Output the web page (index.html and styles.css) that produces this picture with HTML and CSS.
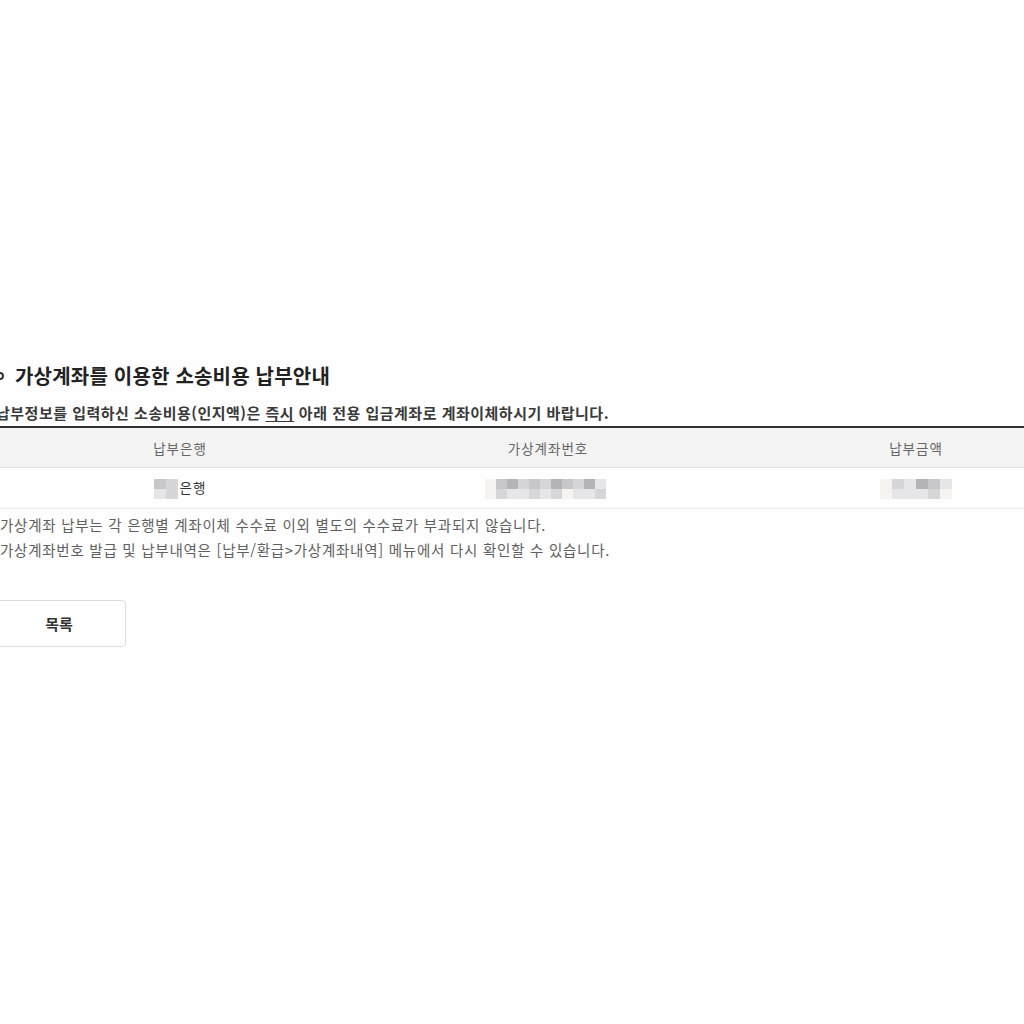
FILE: index.html
```html
<!DOCTYPE html>
<html lang="ko">
<head>
<meta charset="utf-8">
<link rel="stylesheet" href="styles.css">
</head>
<body>
<div class="page">
  <h2 class="title">가상계좌를 이용한 소송비용 납부안내</h2>
  <p class="desc">납부정보를 입력하신 소송비용(인지액)은 <u>즉시</u> 아래 전용 입금계좌로 계좌이체하시기 바랍니다.</p>
  <table class="tbl">
    <thead>
      <tr><th>납부은행</th><th>가상계좌번호</th><th>납부금액</th></tr>
    </thead>
    <tbody>
      <tr>
        <td><span class="mosaic m-bank"><i class="c3"></i><i class="c2"></i><i class="c1"></i><i class="c2"></i></span>은행</td>
        <td><span class="mosaic m-acct"><i class="c0"></i><i class="c3"></i><i class="c4"></i><i class="c2"></i><i class="c3"></i><i class="c2"></i><i class="c4"></i><i class="c3"></i><i class="c2"></i><i class="c4"></i><i class="c1"></i><i class="c0"></i><i class="c2"></i><i class="c1"></i><i class="c1"></i><i class="c2"></i><i class="c1"></i><i class="c2"></i><i class="c0"></i><i class="c1"></i><i class="c1"></i><i class="c2"></i></span></td>
        <td><span class="mosaic m-amt"><i class="c0"></i><i class="c2"></i><i class="c1"></i><i class="c4"></i><i class="c3"></i><i class="c1"></i><i class="c0"></i><i class="c1"></i><i class="c1"></i><i class="c1"></i><i class="c2"></i><i class="c0"></i></span></td>
      </tr>
    </tbody>
  </table>
  <ul class="notes">
    <li>가상계좌 납부는 각 은행별 계좌이체 수수료 이외 별도의 수수료가 부과되지 않습니다.</li>
    <li>가상계좌번호 발급 및 납부내역은 [납부/환급&gt;가상계좌내역] 메뉴에서 다시 확인할 수 있습니다.</li>
  </ul>
  <div class="actions">
    <button class="btn" type="button">목록</button>
  </div>
</div>
</body>
</html>
```

FILE: styles.css
```css
html, body {
  margin: 0;
  padding: 0;
  overflow: hidden;
  background: #fefefe;
}

body {
  font-family: "Noto Sans CJK KR", "Noto Sans", sans-serif;
  color: #333;
}

.page {
  width: 1104px;
  margin-left: -4px;
  padding-top: 364px;
}

.title {
  margin: 0;
  font-size: 20px;
  line-height: 24px;
  font-weight: 700;
  color: #222;
  letter-spacing: 0.2px;
  display: flex;
  align-items: center;
}

.title::before {
  content: "";
  width: 4px;
  height: 4px;
  border: 2px solid #333;
  border-radius: 50%;
  margin-right: 11px;
}

.desc {
  margin: 15px 0 0;
  font-size: 15px;
  line-height: 20px;
  font-weight: 700;
  color: #3a3a3a;
  letter-spacing: 0.5px;
}

.desc u {
  text-underline-offset: 2px;
}

.tbl {
  margin-top: 3px;
  width: 1104px;
  border-collapse: collapse;
  table-layout: fixed;
  border-top: 2px solid #333;
}

.tbl th {
  height: 39px;
  background: #f3f3f3;
  font-size: 13.5px;
  font-weight: 400;
  color: #666;
  letter-spacing: 1px;
  border-bottom: 1px solid #e2e2e2;
  padding: 0;
}

.tbl td {
  height: 40px;
  text-align: center;
  font-size: 13.5px;
  color: #333;
  letter-spacing: 1px;
  border-bottom: 1px solid #ececec;
  padding: 0;
}

.mosaic {
  display: inline-grid;
  grid-template-rows: 10px 10px;
  vertical-align: middle;
}

.mosaic i {
  display: block;
}

.m-bank {
  grid-template-columns: repeat(2, 12px);
  margin-right: 2px;
}

.m-acct {
  grid-template-columns: repeat(11, 11px);
  margin-left: -5px;
}

.m-amt {
  grid-template-columns: repeat(6, 12px);
  margin-left: -1px;
}

.c0 { background: #f6f3f0; }
.c1 { background: #e6e6e8; }
.c2 { background: #d6d6d8; }
.c3 { background: #c7c7c9; }
.c4 { background: #b4b4b6; }

.notes {
  list-style: none;
  margin: 3px 0 0;
  padding: 0 0 0 4px;
  font-size: 14.5px;
  line-height: 25px;
  color: #606060;
  letter-spacing: 0.75px;
}

.actions {
  margin-top: 38px;
}

.btn {
  margin-left: -4px;
  width: 134px;
  height: 47px;
  border: 1px solid #dcdcdc;
  border-radius: 4px;
  background: #fff;
  font-family: "Noto Sans CJK KR", sans-serif;
  font-size: 15px;
  font-weight: 700;
  color: #333;
  padding: 0;
}
```
